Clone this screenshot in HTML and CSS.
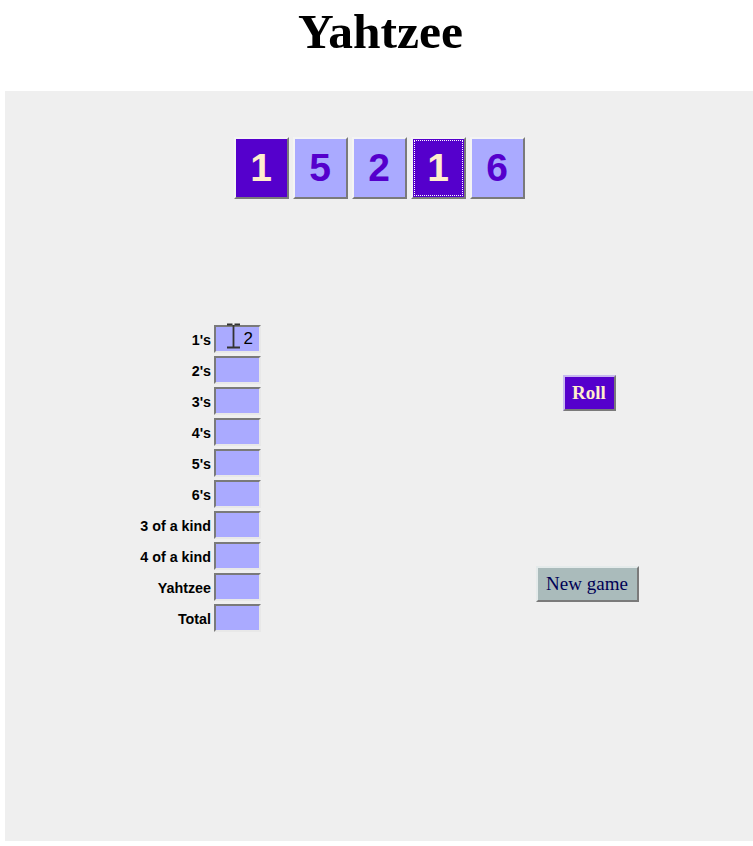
FILE: index.html
```html
<!DOCTYPE html>
<html>
<head>
<meta charset="utf-8">
<title>Yahtzee</title>
<link rel="stylesheet" href="styles.css">
</head>
<body>
<h1 class="title">Yahtzee</h1>
<div class="panel">
  <div class="dice">
    <button class="die held">1</button>
    <button class="die">5</button>
    <button class="die">2</button>
    <button class="die held focused">1</button>
    <button class="die">6</button>
  </div>
  <div class="board">
    <div class="score">
      <label class="lbl">1's</label>
      <div class="cell">
        <input class="box" type="text" value="2">
        <svg class="ibeam" width="15" height="26" viewBox="0 0 15 26"><path d="M1 1.5h5.5M8.5 1.5h5.5M7.5 2v22M1 24.5h13" stroke="#333" stroke-width="1.8" fill="none"/></svg>
      </div>
      <label class="lbl">2's</label><div class="cell"><input class="box" type="text"></div>
      <label class="lbl">3's</label><div class="cell"><input class="box" type="text"></div>
      <label class="lbl">4's</label><div class="cell"><input class="box" type="text"></div>
      <label class="lbl">5's</label><div class="cell"><input class="box" type="text"></div>
      <label class="lbl">6's</label><div class="cell"><input class="box" type="text"></div>
      <label class="lbl">3 of a kind</label><div class="cell"><input class="box" type="text"></div>
      <label class="lbl">4 of a kind</label><div class="cell"><input class="box" type="text"></div>
      <label class="lbl">Yahtzee</label><div class="cell"><input class="box" type="text"></div>
      <label class="lbl">Total</label><div class="cell"><input class="box" type="text"></div>
    </div>
    <div class="controls">
      <button class="roll">Roll</button>
      <button class="newgame">New game</button>
    </div>
  </div>
</div>
</body>
</html>
```
FILE: styles.css
```css
html, body {
  margin: 0;
  padding: 0;
  background: #ffffff;
  overflow: hidden;
}
body {
  font-family: "Liberation Serif", "Times New Roman", serif;
}
.title {
  margin: 4px 0 32px;
  padding-left: 8px;
  font-size: 49.5px;
  line-height: 55px;
  font-weight: bold;
  text-align: center;
  color: #000;
}
.panel {
  margin-left: 5px;
  height: 750px;
  box-sizing: border-box;
  padding-top: 46px;
  background: #efefef;
}
.dice {
  display: flex;
  justify-content: center;
  gap: 4px;
}
.die {
  width: 55px;
  height: 62px;
  box-sizing: border-box;
  margin: 0;
  padding: 0;
  display: flex;
  align-items: center;
  justify-content: center;
  border-style: solid;
  border-width: 2px;
  border-color: #f4f4f4 #7a7a7a #7a7a7a #f4f4f4;
  background: #aaaaff;
  color: #5500cc;
  font-family: "Liberation Sans", Arial, sans-serif;
  font-weight: bold;
  font-size: 39px;
}
.die.held {
  background: #5500cc;
  color: #ffeecc;
}
.die.focused {
  outline: 1px dotted #ffffff;
  outline-offset: -4px;
}
.board {
  display: flex;
  margin-top: 126px;
}
.score {
  display: grid;
  grid-template-columns: 206px 47px;
  grid-auto-rows: 28px;
  column-gap: 3px;
  row-gap: 3px;
  align-items: center;
}
.lbl {
  text-align: right;
  font-family: "Liberation Sans", Arial, sans-serif;
  font-weight: bold;
  font-size: 14.3px;
  color: #000;
  padding-top: 1px;
}
.cell {
  position: relative;
  height: 28px;
}
.box {
  display: block;
  width: 47px;
  height: 28px;
  box-sizing: border-box;
  margin: 0;
  padding: 0 6px 0 0;
  text-align: right;
  border-style: solid;
  border-width: 2px;
  border-color: #7a7a7a #e8e8e8 #e8e8e8 #7a7a7a;
  background: #aaaaff;
  color: #000;
  font-family: "Liberation Sans", Arial, sans-serif;
  font-size: 17px;
}
.ibeam {
  position: absolute;
  left: 12px;
  top: -2px;
}
.controls {
  display: flex;
  flex-direction: column;
  align-items: center;
  width: 140px;
  margin-left: 258px;
  padding-top: 50px;
}
.roll, .newgame {
  margin: 0;
  height: 36px;
  box-sizing: border-box;
  border-style: solid;
  border-width: 2px;
  font-family: "Liberation Serif", "Times New Roman", serif;
  font-size: 19px;
  line-height: 22px;
}
.roll {
  width: 53px;
  padding: 0;
  background: #5500cc;
  color: #ffeecc;
  font-weight: bold;
  border-color: #c8b8f0 #7a7a7a #7a7a7a #c8b8f0;
}
.newgame {
  width: 103px;
  padding: 0;
  margin: 155px 4px 0 0;
  background: #aabbbb;
  color: #000055;
  border-color: #e4eaea #7a7a7a #7a7a7a #e4eaea;
}
```
